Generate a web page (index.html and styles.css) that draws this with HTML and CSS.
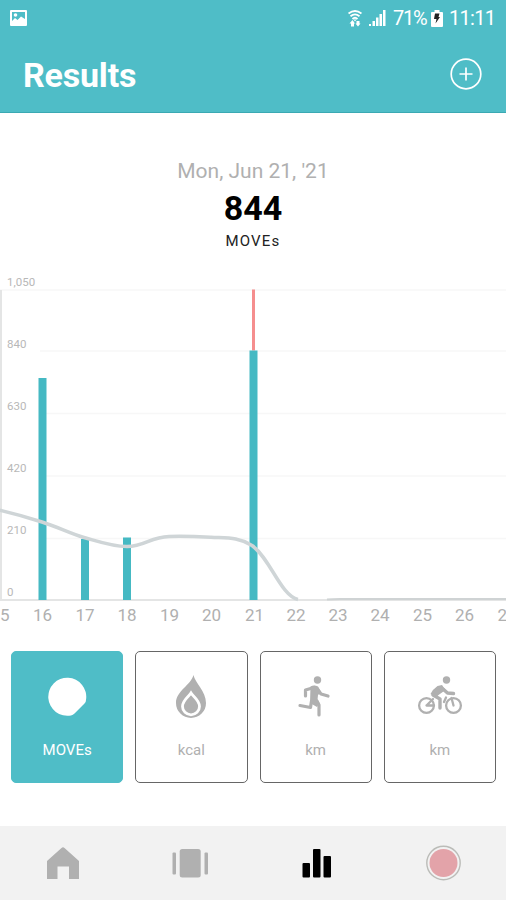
FILE: index.html
```html
<!DOCTYPE html>
<html lang="en">
<head>
<meta charset="utf-8">
<title>Results</title>
<link rel="stylesheet" href="styles.css">
</head>

<body>
	<div class="screen">
		<header class="header">
			<div class="status">
				<svg class="status-picture" width="17" height="16" viewBox="0 0 17 16">
					<path fill="#fff" fill-rule="evenodd" d="M1 0H16Q17 0 17 1V15Q17 16 16 16H1Q0 16 0 15V1Q0 0 1 0ZM2 2V11L5 8L7.500 10L11 6.500L15 9V2Z"/>
					<circle cx="5.500" cy="5" r="1.800" fill="#fff"/>
				</svg>
				<svg class="status-wifi" width="14" height="17" viewBox="0 0 14 17">
					<g fill="none" stroke="#fff" stroke-width="1.800">
						<path d="M.5 3.500Q7-1.500 13.500 3.500M2.500 6.200Q7 2.600 11.500 6.200M4.500 9Q7 6.500 9.500 9"/>
					</g>
					<path fill="#fff" d="M5.500 9.500H8.500L7 11.500ZM1.500 13.500L4.500 10L7 13.500H6V16.500H3V13.500ZM7.500 13.500H8.500V11H11.500V13.500H12.500L10 16.500Z"/>
				</svg>
				<svg class="status-signal" width="17" height="16" viewBox="0 0 17 16">
					<path fill="#fff" d="M0 14H2V16H0ZM3.500 11H6V16H3.500ZM7 7.500H9.500V16H7ZM10.500 4H13V16H10.500ZM14 0H16.500V16H14Z"/>
				</svg>
				<span class="status-percent">71%</span>
				<svg class="status-battery" width="12" height="17" viewBox="0 0 12 17">
					<path fill="#fff" d="M3.500 0H8.500V2H11Q12 2 12 3V16Q12 17 11 17H1Q0 17 0 16V3Q0 2 1 2H3.500Z"/>
					<path fill="#222" d="M4 3.500H8.500L7.500 7H9L4.500 13.500L5.500 9H3Z"/>
				</svg>
				<span class="status-time">11:11</span>
			</div>
			<div class="title-row">
				<h1>Results</h1>
				<svg class="add" width="32" height="32" viewBox="0 0 32 32">
					<g fill="none" stroke="#fff" stroke-width="1.700">
						<circle cx="16" cy="16" r="14.800"/>
						<path d="M16 9.500V22.500M9.500 16H22.500"/>
					</g>
				</svg>
			</div>
		</header>

		<div class="summary">
			<div class="date">Mon, Jun 21, '21</div>
			<div class="total">844</div>
			<div class="unit">MOVEs</div>
		</div>

		<svg class="chart" width="506" height="370" viewBox="0 0 506 370">
			<!-- grid -->
			<path class="grid" d="M0 20H506M40 81H506M40 143.500H506M40 206H506M40 268.500H506"/>
			<path class="axis" d="M0 330H506M1 20V330"/>
			<!-- bars -->
			<rect class="goal" x="252" y="19.500" width="3" height="61"/>
			<rect class="bar" x="38.500" y="108" width="8" height="222"/>
			<rect class="bar" x="81" y="269" width="8" height="61"/>
			<rect class="bar" x="123" y="267.500" width="8" height="62.500"/>
			<rect class="bar" x="249.500" y="80.500" width="8" height="249.500"/>
			<!-- average -->
			<path class="average" d="M-1 240C14 243.500 28 247.500 42 252C58 257 70 263.500 84 267.500C100 272 112 276.500 127 276.500C145 276.500 150 267 169 266.500C187 266 196 266.500 211 267.300C228 268.200 238 267 252 275.500C270 288 281 326 298 329.500"/>
			<path class="average-zero" d="M327 329.500Q332 329 340 329H506"/>
			<g class="y-labels">
				<text x="7" y="15.500">1,050</text>
				<text x="7" y="77.500">840</text>
				<text x="7" y="139.500">630</text>
				<text x="7" y="201.500">420</text>
				<text x="7" y="264">210</text>
				<text x="7" y="326">0</text>
			</g>
			<g class="x-labels">
				<text x="0" y="351">15</text>
				<text x="42.500" y="351">16</text>
				<text x="85" y="351">17</text>
				<text x="127" y="351">18</text>
				<text x="169.500" y="351">19</text>
				<text x="211.500" y="351">20</text>
				<text x="254.500" y="351">21</text>
				<text x="296" y="351">22</text>
				<text x="338" y="351">23</text>
				<text x="380" y="351">24</text>
				<text x="422.500" y="351">25</text>
				<text x="464.500" y="351">26</text>
				<text x="507" y="351">27</text>
			</g>
		</svg>

		<div class="cards">
			<div class="card active">
				<svg width="48" height="44" viewBox="0 0 48 44">
					<path fill="#fff" d="M43 25A19 19 0 1 0 28 40.400Q30 40 31.500 38.500L41.500 28.500Q43 27 43 25Z"/>
				</svg>
				<span>MOVEs</span>
			</div>
			<div class="card">
				<svg width="48" height="44" viewBox="0 0 48 44">
					<path fill="#b0b0b0" d="M26.500 0C28 8 39 16 39 28A15 15 0 0 1 9 28C9 16 24 10 26.500 0Z"/>
					<path fill="#b0b0b0" stroke="#fff" stroke-width="2.800" d="M24 18C22 21.500 15.500 25 15.500 31.500A8.500 8.300 0 0 0 32.500 31.500C32.500 25 26 21.500 24 18Z"/>
				</svg>
				<span>kcal</span>
			</div>
			<div class="card">
				<svg width="48" height="44" viewBox="0 0 48 44">
					<circle cx="25.500" cy="5" r="3.700" fill="#b0b0b0"/>
					<!-- arms, torso, legs -->
					<g fill="none" stroke="#b0b0b0" stroke-width="3.200" stroke-linecap="round" stroke-linejoin="round">
						<path d="M22 12.500L13.500 15V21M25 13.500L29 19L36 21M25 26L27 30V40M19.500 26L18.500 32.500L8 30.500"/>
					</g>
					<path fill="#b0b0b0" d="M18.500 11.500Q22 9.500 26 11.500L29 17L26 20L25.500 25L27.500 28L25 32L18 28Z"/>
				</svg>
				<span>km</span>
			</div>
			<div class="card">
				<svg width="48" height="44" viewBox="0 0 48 44">
					<g fill="none" stroke="#b0b0b0" stroke-width="2.300" stroke-linecap="round" stroke-linejoin="round">
						<circle cx="10.500" cy="30.500" r="7.400"/>
						<circle cx="37.500" cy="30.500" r="7.400"/>
						<path d="M10.500 30.500L17 24M10.500 30.500H18M37.500 30.500L35.500 23M28 27L30 22.500"/>
						<path stroke-width="3.400" d="M17 20L24 24V33M27 14L31.500 18L37.500 18.500"/>
					</g>
					<circle cx="30.500" cy="5" r="3.700" fill="#b0b0b0"/>
					<path fill="#b0b0b0" d="M21.500 11L26 10L29.500 15L22.500 20L20 22.500L14.500 19Q17 14 21.500 11Z"/>
				</svg>
				<span>km</span>
			</div>
		</div>

		<nav class="tabs">
			<div class="tab">
				<svg width="38" height="38" viewBox="0 0 38 38">
					<path fill="#b0b0b0" d="M17.500 4Q19 2.500 20.500 4L35 17V35H25V22.500H13.500V35H3V17Z"/>
				</svg>
			</div>
			<div class="tab">
				<svg width="38" height="38" viewBox="0 0 38 38">
					<g fill="#b0b0b0">
						<rect x="8.700" y="5" width="21" height="28.500" rx="2.500"/>
						<rect x="1.500" y="8.500" width="3.500" height="22" rx="1"/>
						<rect x="33.500" y="8.500" width="3.500" height="22" rx="1"/>
					</g>
				</svg>
			</div>
			<div class="tab">
				<svg width="38" height="38" viewBox="0 0 38 38">
					<rect x="5.500" y="19" width="7.500" height="14.500" rx="1"/>
					<rect x="16" y="5" width="7.500" height="28.500" rx="1"/>
					<rect x="26.500" y="12" width="7.500" height="21.500" rx="1"/>
				</svg>
			</div>
			<div class="tab">
				<svg width="38" height="38" viewBox="0 0 38 38">
					<circle cx="19.500" cy="19" r="16.700" fill="#f2f2f2" stroke="#bbbcb8" stroke-width="1.400"/>
					<circle cx="19.500" cy="19" r="14" fill="#e3a3a9"/>
				</svg>
			</div>
		</nav>
	</div>
</body>
</html>
```

FILE: styles.css
```css
* {
	box-sizing: border-box;
}
body {
	margin: 0;
	background: #fff;
	font-family: Roboto, "Liberation Sans", sans-serif;
}
svg {
	display: block;
	flex: none;
}
.screen {
	width: 506px;
	height: 900px;
	overflow: hidden;
	display: flex;
	flex-direction: column;
}
.header {
	height: 113px;
	flex: none;
	background: #4fbdc7;
	border-bottom: 1px solid #3ba9b3;
	color: #fff;
}
.status {
	height: 36px;
	display: flex;
	align-items: center;
	padding: 0 11px 0 10px;
	font-size: 20px;
	line-height: 36px;
}
.status-picture {
	margin-right: auto;
}
.status-signal {
	margin: 0 7px 0 7px;
}
.status-percent {
	width: 35px;
	letter-spacing: -1.2px;
}
.status-battery {
	margin: 0 6px 0 3px;
}
.status-time {
	width: 46px;
	letter-spacing: -0.7px;
	white-space: nowrap;
}
.title-row {
	height: 76px;
	display: flex;
	align-items: center;
	justify-content: space-between;
	padding: 0 24px 0 23px;
}
h1 {
	margin: 2px 0 0;
	font-size: 34px;
	line-height: 40px;
	font-weight: 700;
	letter-spacing: -0.2px;
}
.summary {
	height: 157px;
	flex: none;
	padding-top: 45px;
	text-align: center;
}
.date {
	font-size: 21px;
	line-height: 26px;
	color: #b0b0b0;
}
.total {
	font-size: 34px;
	line-height: 48px;
	font-weight: 700;
	color: #000;
}
.unit {
	font-size: 15px;
	line-height: 18px;
	letter-spacing: 1.2px;
	color: #222;
}
.chart {
	width: 506px;
	height: 370px;
}
.grid {
	stroke: #f7f7f7;
	stroke-width: 1.5;
}
.axis {
	stroke: #e4e5e5;
	stroke-width: 2;
}
.bar {
	fill: #45b9c3;
}
.goal {
	fill: #f58e8e;
}
.average {
	fill: none;
	stroke: #cfd5d7;
	stroke-width: 3.5;
}
.average-zero {
	fill: none;
	stroke: #cfd3d4;
	stroke-width: 2;
}
.y-labels {
	font-size: 11.5px;
	fill: #b8b8b8;
}
.x-labels {
	font-size: 17px;
	fill: #b0b0b0;
	text-anchor: middle;
}
.cards {
	display: flex;
	gap: 12px;
	padding: 11px 10px 0 11px;
	height: 186px;
	flex: none;
}
.card {
	flex: 1;
	height: 132px;
	border: 1.5px solid #666;
	border-radius: 5px;
	color: #b0b0b0;
	display: flex;
	flex-direction: column;
	align-items: center;
	padding-top: 23px;
	font-size: 15px;
	line-height: 20px;
}
.card span {
	margin-top: 21px;
}
.card.active {
	background: #4fbdc7;
	border-color: #4fbdc7;
	color: #fff;
}
.tabs {
	height: 74px;
	flex: none;
	display: flex;
	background: #f2f2f2;
}
.tab {
	flex: 1;
	display: flex;
	align-items: center;
	justify-content: center;
}
```
